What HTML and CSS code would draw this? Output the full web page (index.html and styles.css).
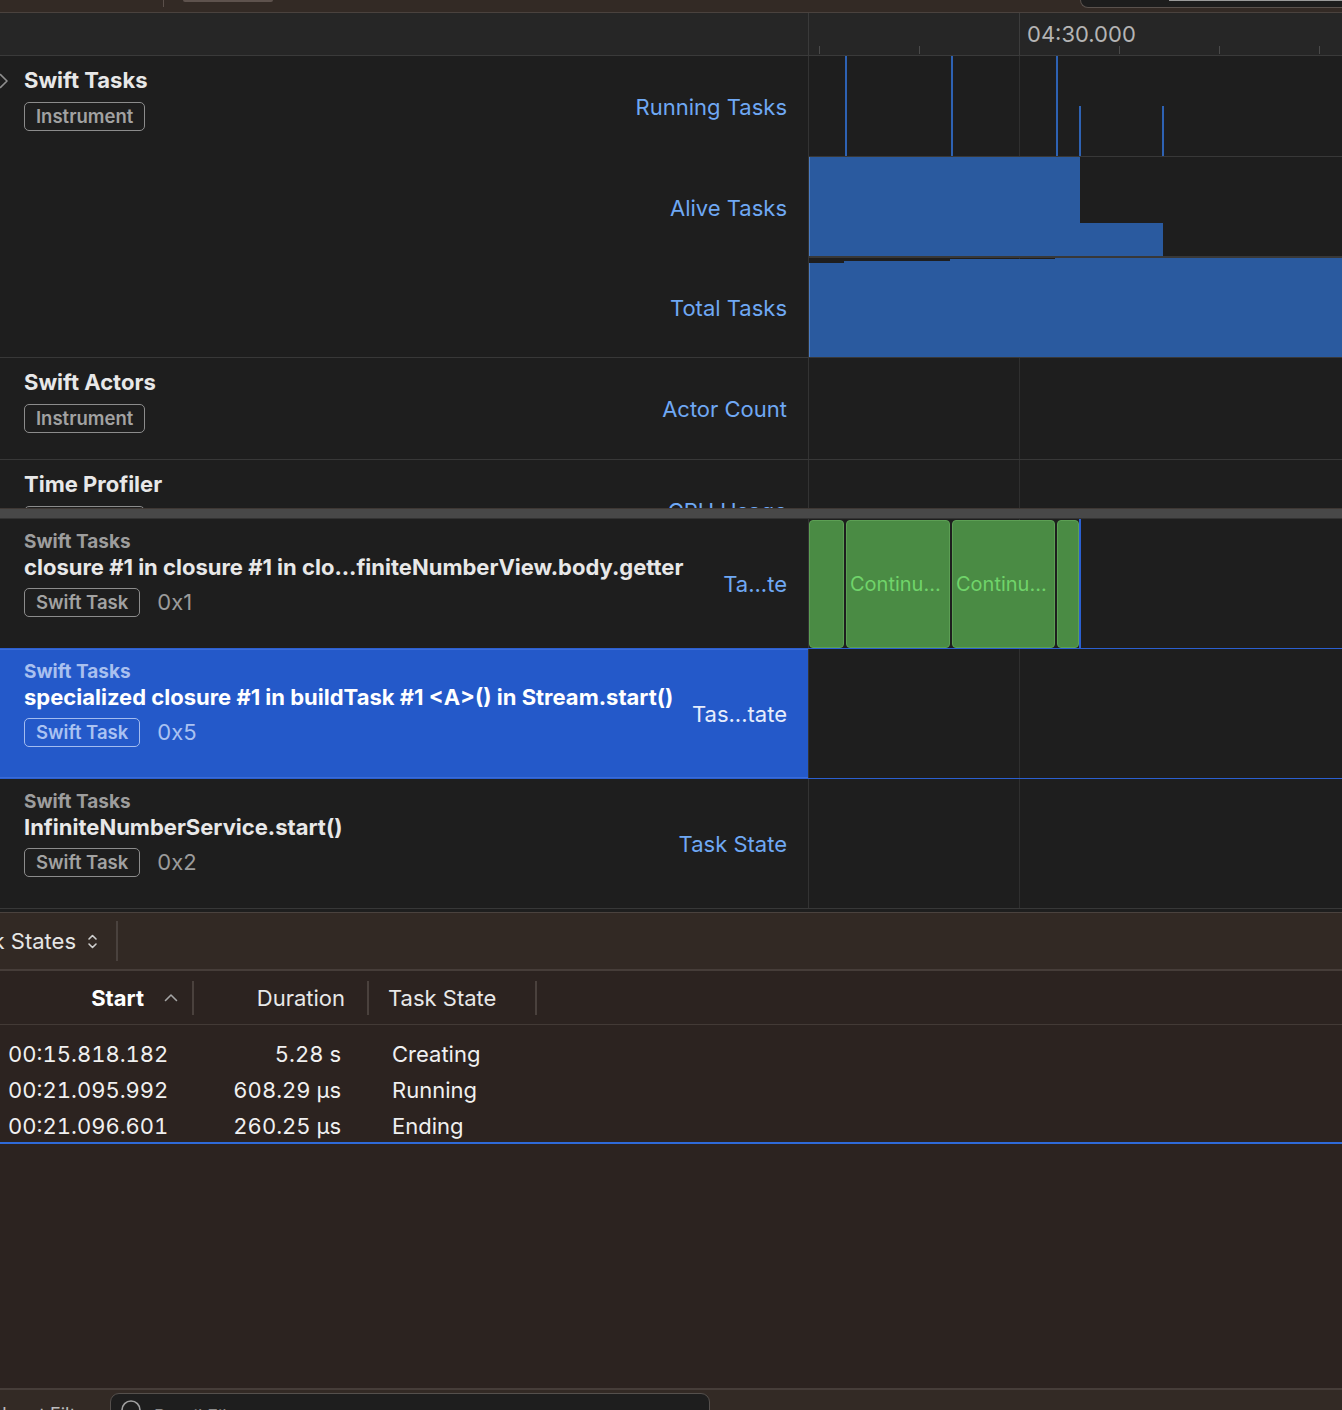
FILE: index.html
```html
<!DOCTYPE html>
<html>
<head>
<meta charset="utf-8">
<title>Instruments</title>
<link rel="stylesheet" href="styles.css">
</head>
<body>
<div class="app">
  <div class="topbar">
    <div class="tb-sep"></div>
    <div class="tb-btn"></div>
    <div class="tb-field"><div class="tb-field-inner"></div></div>
  </div>

  <div class="ruler">
    <div class="ruler-left"></div>
    <div class="ruler-right"><span class="ruler-label">04:30.000</span></div>
  </div>

  <div class="track">
    <div class="label">
      <div class="info">
        <div class="disclosure">
          <svg width="10" height="16" viewBox="0 0 10 16"><polyline points="1.5,1.5 8,8 1.5,14.5" fill="none" stroke="#8f8f8f" stroke-width="1.6" stroke-linecap="round" stroke-linejoin="round"/></svg>
        </div>
        <div class="info-body">
          <div class="title">Swift Tasks</div>
          <span class="badge">Instrument</span>
        </div>
      </div>
      <div class="metrics">
        <div class="metric">Running Tasks</div>
        <div class="metric">Alive Tasks</div>
        <div class="metric short">Total Tasks</div>
      </div>
    </div>
    <div class="graph">
      <div class="lane">
        <div class="spike" style="left:36px"></div>
        <div class="spike" style="left:142px"></div>
        <div class="spike" style="left:247px"></div>
        <div class="spike half" style="left:270px"></div>
        <div class="spike half" style="left:353px"></div>
      </div>
      <div class="lane lane-thick">
        <svg class="fill" viewBox="0 0 533 99" preserveAspectRatio="none"><polygon points="0,0 271,0 271,66 354,66 354,99 0,99" fill="#2a5a9f"/><rect x="0" y="0" width="1" height="99" fill="#4a7cc4"/></svg>
      </div>
      <div class="lane short">
        <svg class="fill" viewBox="0 0 533 99" preserveAspectRatio="none"><polygon points="0,5 35,5 35,3 141,3 141,1 246,1 246,0 533,0 533,99 0,99" fill="#2a5a9f"/><rect x="0" y="5" width="1" height="94" fill="#4a7cc4"/></svg>
      </div>
    </div>
  </div>

  <div class="track">
    <div class="label">
      <div class="info">
        <div class="disclosure"></div>
        <div class="info-body">
          <div class="title">Swift Actors</div>
          <span class="badge">Instrument</span>
        </div>
      </div>
      <div class="metrics">
        <div class="metric">Actor Count</div>
      </div>
    </div>
    <div class="graph"></div>
  </div>

  <div class="track clipped">
    <div class="label">
      <div class="info">
        <div class="disclosure"></div>
        <div class="info-body">
          <div class="title">Time Profiler</div>
          <span class="badge">Instrument</span>
        </div>
      </div>
      <div class="metrics">
        <div class="metric">CPU Usage</div>
      </div>
    </div>
    <div class="graph"></div>
  </div>

  <div class="splitter"></div>

  <div class="row above-sel">
    <div class="label">
      <div class="row-info">
        <div class="kind">Swift Tasks</div>
        <div class="name">closure #1 in closure #1 in clo...finiteNumberView.body.getter</div>
        <div class="meta"><span class="badge">Swift Task</span><span class="addr">0x1</span></div>
      </div>
      <div class="metric row-metric">Ta...te</div>
    </div>
    <div class="graph">
      <div class="block" style="left:0;width:35px"></div>
      <div class="block" style="left:37px;width:104px">Continu...</div>
      <div class="block" style="left:143px;width:103px">Continu...</div>
      <div class="block" style="left:248px;width:22px"></div>
      <div class="marker" style="left:270px"></div>
    </div>
  </div>

  <div class="row sel">
    <div class="label">
      <div class="row-info">
        <div class="kind">Swift Tasks</div>
        <div class="name">specialized closure #1 in buildTask #1 &lt;A&gt;() in Stream.start()</div>
        <div class="meta"><span class="badge">Swift Task</span><span class="addr">0x5</span></div>
      </div>
      <div class="metric row-metric">Tas...tate</div>
    </div>
    <div class="graph"></div>
  </div>

  <div class="row">
    <div class="label">
      <div class="row-info">
        <div class="kind">Swift Tasks</div>
        <div class="name">InfiniteNumberService.start()</div>
        <div class="meta"><span class="badge">Swift Task</span><span class="addr">0x2</span></div>
      </div>
      <div class="metric row-metric">Task State</div>
    </div>
    <div class="graph"></div>
  </div>

  <div class="pane-gap"></div>

  <div class="detail">
    <div class="detail-toolbar">
      <div class="scope">
        <span>Task States</span>
        <svg width="11" height="17" viewBox="0 0 11 17"><polyline points="2,6 5.5,2.5 9,6" fill="none" stroke="#cfcfcf" stroke-width="1.6" stroke-linecap="round" stroke-linejoin="round"/><polyline points="2,11 5.5,14.5 9,11" fill="none" stroke="#cfcfcf" stroke-width="1.6" stroke-linecap="round" stroke-linejoin="round"/></svg>
      </div>
      <div class="tb-divider"></div>
    </div>

    <div class="thead">
      <div class="th c1 sorted"><span>Start</span>
        <svg width="14" height="9" viewBox="0 0 14 9"><polyline points="1.5,7.5 7,2 12.5,7.5" fill="none" stroke="#a5a5a5" stroke-width="1.6" stroke-linecap="round" stroke-linejoin="round"/></svg>
      </div>
      <div class="th c2">Duration</div>
      <div class="th c3">Task State</div>
    </div>

    <div class="tbody">
      <div class="tr"><div class="td c1">00:15.818.182</div><div class="td c2">5.28 s</div><div class="td c3">Creating</div></div>
      <div class="tr"><div class="td c1">00:21.095.992</div><div class="td c2">608.29 µs</div><div class="td c3">Running</div></div>
      <div class="tr"><div class="td c1">00:21.096.601</div><div class="td c2">260.25 µs</div><div class="td c3">Ending</div></div>
    </div>

    <div class="filler"></div>

    <div class="bottombar">
      <span class="input-filter">Input Filter</span>
      <div class="search">
        <svg width="24" height="24" viewBox="0 0 24 24"><circle cx="11" cy="11" r="9" fill="none" stroke="#a0a0a0" stroke-width="1.6"/></svg>
        <span class="placeholder">Detail Filter</span>
      </div>
    </div>
  </div>
</div>
</body>
</html>
```

FILE: styles.css
```css
* { box-sizing: border-box; margin: 0; padding: 0; }

html, body {
  width: 1342px;
  height: 1410px;
  overflow: hidden;
  background: #1e1e1e;
}

body {
  font-family: Inter, "Noto Sans", sans-serif;
  color: #e8e8e8;
  -webkit-font-smoothing: antialiased;
}

.app {
  display: flex;
  flex-direction: column;
  height: 1410px;
}

/* ---------- top toolbar ---------- */
.topbar {
  flex: none;
  height: 13px;
  background: #332a25;
  border-bottom: 1px solid #4a423e;
  display: flex;
  align-items: flex-start;
}
.tb-sep { width: 1px; height: 7px; background: #5a4f4a; margin-left: 163px; }
.tb-btn { width: 90px; height: 2px; margin-left: 19px; background: #5e524d; border-radius: 0 0 4px 4px; }
.tb-field {
  margin-left: auto;
  width: 262px;
  height: 8px;
  background: #1d1d1d;
  border-left: 1px solid #5a524e;
  border-bottom: 1px solid #5a524e;
  border-radius: 0 0 0 9px;
  padding-left: 88px;
}
.tb-field-inner { height: 1px; background: #9a9a9a; }

/* ---------- ruler ---------- */
.ruler {
  flex: none;
  height: 43px;
  display: flex;
  background: #262626;
  border-bottom: 1px solid #3a3a3a;
}
.ruler-left { width: 809px; border-right: 1px solid #3a3a3a; }
.ruler-right {
  flex: 1;
  padding-left: 218px;
  background-image:
    linear-gradient(to right, transparent 210px, #3c3c3c 210px, #3c3c3c 211px, transparent 211px),
    repeating-linear-gradient(to right, transparent 0, transparent 10px, #4a4a4a 10px, #4a4a4a 11px, transparent 11px, transparent 100px);
  background-size: 100% 100%, 100% 8px;
  background-position: 0 0, 0 calc(100% - 1px);
  background-repeat: no-repeat;
}
.ruler-label { font-size: 22px; line-height: 42px; color: #b4b4b4; }

/* ---------- tracks ---------- */
.track {
  flex: none;
  display: flex;
  border-bottom: 1px solid #383838;
}
.track.clipped { height: 48px; overflow: hidden; border-bottom: none; align-items: flex-start; }

.label {
  width: 809px;
  flex: none;
  display: flex;
  border-right: 1px solid #333333;
  padding-right: 21px;
}
.track.clipped .label { height: 101px; }
.info { flex: 1; display: flex; padding-top: 12px; }
.disclosure { width: 24px; flex: none; padding-top: 5px; }
.disclosure svg { display: block; margin-left: -1px; }
.title { font-size: 22px; line-height: 24px; font-weight: 700; color: #e8e8e8; }
.badge {
  display: inline-block;
  margin-top: 10px;
  border: 1.5px solid #8c8c8c;
  border-radius: 5px;
  padding: 0 11px;
  font-size: 18.5px;
  line-height: 26.5px;
  font-weight: 600;
  color: #a2a2a2;
}

.metrics { display: flex; flex-direction: column; }
.metric {
  flex: none;
  height: 101px;
  display: flex;
  align-items: center;
  justify-content: flex-end;
  font-size: 22px;
  color: #6fa8f4;
  white-space: nowrap;
}
.metric.short { height: 99px; }

.graph {
  flex: 1;
  position: relative;
  align-self: stretch;
  background-image: linear-gradient(to right, transparent 210px, #2f2f2f 210px, #2f2f2f 211px, transparent 211px);
}

.lane { position: relative; height: 101px; border-bottom: 1px solid #383838; }
.lane.lane-thick { border-bottom: 2px solid #383838; }
.lane.short { height: 99px; border-bottom: none; }
.lane .fill { position: absolute; inset: 0; width: 100%; height: 100%; display: block; }

.spike { position: absolute; top: 0; bottom: 0; width: 2px; background: #2e62b3; }
.spike.half { top: 50px; }

.splitter {
  flex: none;
  height: 11px;
  background: #484848;
  border-top: 1px solid #3f3834;
  border-bottom: 1px solid #333333;
}

/* ---------- task rows ---------- */
.row {
  flex: none;
  height: 130px;
  display: flex;
  border-bottom: 1px solid #383838;
}
.row.above-sel, .row.sel { border-bottom-color: #2b5fd0; }
.row .label { padding-left: 24px; }
.row-info { flex: 1; padding-top: 12px; }
.kind { font-size: 19px; line-height: 22px; font-weight: 700; color: #9d9d9d; }
.name { font-size: 22px; line-height: 24px; font-weight: 700; color: #e8e8e8; margin-top: 2px; white-space: nowrap; }
.meta { display: flex; align-items: center; gap: 17px; margin-top: 9px; }
.meta .badge { margin-top: 0; }
.addr { font-size: 22px; color: #9b9b9b; }
.row-metric { height: 129px; }

.row.sel .label { background: #2459c9; box-shadow: inset 0 1px 0 #3a6bd8, inset 0 -1px 0 #3a6bd8; }
.row.sel .kind { color: #a9c0ef; }
.row.sel .name { color: #ffffff; }
.row.sel .badge { border-color: #a3bcf0; color: #aac2f2; }
.row.sel .addr { color: #aac2f2; }
.row.sel .row-metric { color: #e6edfc; }

.block {
  position: absolute;
  top: 1px;
  bottom: 0;
  background: #4a8b44;
  border: 1px solid #5c9f54;
  border-radius: 4px;
  padding-left: 3px;
  display: flex;
  align-items: center;
  overflow: hidden;
  white-space: nowrap;
  font-size: 20px;
  color: #70d46a;
}
.marker { position: absolute; top: 0; bottom: 0; width: 2px; background: #2b5fd0; }

.pane-gap { flex: none; height: 4px; background: #1e1e1e; border-bottom: 1px solid #4a423e; }

/* ---------- detail pane ---------- */
.detail {
  flex: 1;
  display: flex;
  flex-direction: column;
  background: #2c2320;
}
.detail-toolbar {
  flex: none;
  height: 58px;
  background: #322924;
  border-bottom: 2px solid #463d39;
  display: flex;
  align-items: center;
}
.scope {
  margin-left: -44px;
  display: flex;
  align-items: center;
  gap: 11px;
  font-size: 22px;
  color: #e6e6e6;
}
.scope svg { display: block; }
.tb-divider { width: 2px; height: 40px; background: #4a423e; margin-left: 18px; }

.thead {
  flex: none;
  height: 54px;
  display: flex;
  align-items: center;
  border-bottom: 1px solid #433a36;
  font-size: 22px;
  color: #e8e8e8;
}
.th {
  height: 34px;
  display: flex;
  align-items: center;
  border-right: 2px solid #4a413d;
}
.th.c1 { width: 194px; justify-content: flex-end; gap: 20px; padding-right: 14px; font-weight: 700; color: #ffffff; }
.th.c1 svg { display: block; }
.th.c2 { width: 175px; justify-content: flex-end; padding-right: 22px; }
.th.c3 { width: 168px; padding-left: 19px; }

.tbody {
  flex: none;
  height: 119px;
  padding-top: 11px;
  border-bottom: 2px solid #2f6ad8;
}
.tr { display: flex; height: 36px; align-items: center; font-size: 22px; color: #f0f0f0; font-variant-numeric: tabular-nums; }
.td.c1 { width: 194px; padding-left: 8px; white-space: nowrap; }
.td.c2 { width: 175px; text-align: right; padding-right: 28px; white-space: nowrap; }
.td.c3 { padding-left: 23px; }

.filler { flex: 1; }

.bottombar {
  flex: none;
  height: 22px;
  background: #332a25;
  border-top: 2px solid #463d39;
  display: flex;
  align-items: flex-start;
  overflow: hidden;
}
.input-filter {
  font-size: 18px;
  line-height: 20px;
  color: #bdbdbd;
  margin-top: 15px;
  margin-left: 2px;
  width: 108px;
  white-space: nowrap;
}
.search {
  width: 600px;
  height: 34px;
  margin-top: 3px;
  background: #1e1e1e;
  border: 1px solid #55504d;
  border-radius: 9px;
  display: flex;
  align-items: flex-start;
  padding: 5px 0 0 9px;
  gap: 10px;
}
.search svg { display: block; }
.placeholder { font-size: 18px; line-height: 24px; color: #8a8a8a; margin-top: 6px; }
```
